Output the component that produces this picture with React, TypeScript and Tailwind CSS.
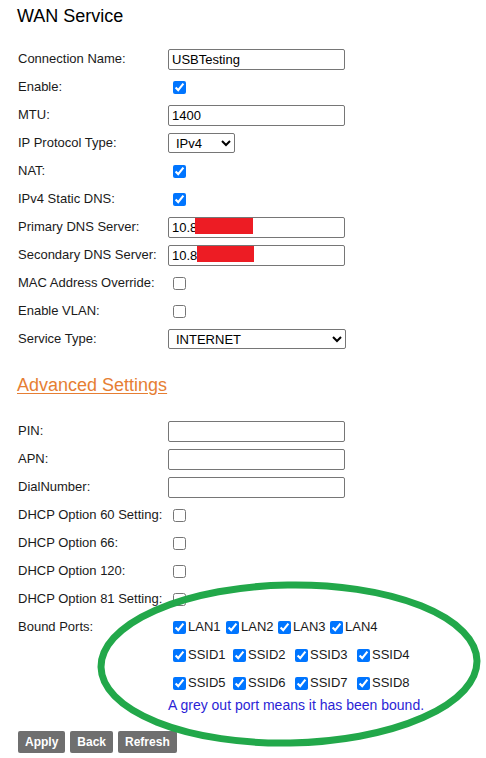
import type { ReactNode } from "react";

function Row({ label, children }: { label: string; children?: ReactNode }) {
  return (
    <div className="grid h-[28px] grid-cols-[150px_1fr] items-center">
      <span className="whitespace-nowrap">{label}</span>
      <div className="flex items-center">{children}</div>
    </div>
  );
}

function TextBox({ value = "", redact }: { value?: string; redact?: string }) {
  return (
    <div className="relative">
      <input
        defaultValue={value}
        className="h-[21px] w-[177px] rounded-[2px] border border-[#767676] bg-white px-[3px] text-[13px] text-black"
      />
      {redact && <div className={`absolute bg-[#ed1c24] ${redact}`} />}
    </div>
  );
}

function Check({ on = false }: { on?: boolean }) {
  return <input type="checkbox" defaultChecked={on} className="ml-[5px] h-[13px] w-[13px]" />;
}

function Port({ name, w }: { name: string; w: string }) {
  return (
    <label className={`flex items-center ${w}`}>
      <input type="checkbox" defaultChecked className="h-[13px] w-[13px]" />
      <span className="ml-[2px]">{name}</span>
    </label>
  );
}

export default function App() {
  return (
    <div className="relative min-h-[758px] bg-white font-['Liberation_Sans',Arial,sans-serif] text-[13px] text-[#1a1a1a]">
      <div className="px-[17px] pt-[5px]">
        <h1 className="text-[18px] leading-[22px] text-black">WAN Service</h1>

        <div className="mt-[18px] pl-[1px]">
          <Row label="Connection Name:">
            <TextBox value="USBTesting" />
          </Row>
          <Row label="Enable:">
            <Check on />
          </Row>
          <Row label="MTU:">
            <TextBox value="1400" />
          </Row>
          <Row label="IP Protocol Type:">
            <select className="h-[20px] w-[67px] rounded-[2px] border border-[#767676] bg-white pl-[3px] text-[13px] text-black">
              <option>IPv4</option>
            </select>
          </Row>
          <Row label="NAT:">
            <Check on />
          </Row>
          <Row label="IPv4 Static DNS:">
            <Check on />
          </Row>
          <Row label="Primary DNS Server:">
            <TextBox value="10.8" redact="left-[27px] top-[1px] h-[16px] w-[58px]" />
          </Row>
          <Row label="Secondary DNS Server:">
            <TextBox value="10.8" redact="left-[29px] top-[1px] h-[16px] w-[57px]" />
          </Row>
          <Row label="MAC Address Override:">
            <Check />
          </Row>
          <Row label="Enable VLAN:">
            <Check />
          </Row>
          <Row label="Service Type:">
            <select className="h-[20px] w-[178px] rounded-[2px] border border-[#767676] bg-white pl-[3px] text-[13px] text-black">
              <option>INTERNET</option>
            </select>
          </Row>
        </div>

        <a href="#" className="mt-[21px] block text-[18px] leading-[22px] text-[#e67e33] underline underline-offset-2">
          Advanced Settings
        </a>

        <div className="mt-[21px] pl-[1px]">
          <Row label="PIN:">
            <TextBox />
          </Row>
          <Row label="APN:">
            <TextBox />
          </Row>
          <Row label="DialNumber:">
            <TextBox />
          </Row>
          <Row label="DHCP Option 60 Setting:">
            <Check />
          </Row>
          <Row label="DHCP Option 66:">
            <Check />
          </Row>
          <Row label="DHCP Option 120:">
            <Check />
          </Row>
          <Row label="DHCP Option 81 Setting:">
            <Check />
          </Row>
          <div className="grid grid-cols-[150px_1fr]">
            <span className="flex h-[28px] items-center">Bound Ports:</span>
            <div className="pl-[5px]">
              <div className="flex h-[28px] items-center">
                <Port name="LAN1" w="w-[53px]" />
                <Port name="LAN2" w="w-[52px]" />
                <Port name="LAN3" w="w-[52px]" />
                <Port name="LAN4" w="w-[52px]" />
              </div>
              <div className="flex h-[28px] items-center">
                <Port name="SSID1" w="w-[60px]" />
                <Port name="SSID2" w="w-[62px]" />
                <Port name="SSID3" w="w-[62px]" />
                <Port name="SSID4" w="w-[62px]" />
              </div>
              <div className="flex h-[28px] items-center">
                <Port name="SSID5" w="w-[60px]" />
                <Port name="SSID6" w="w-[62px]" />
                <Port name="SSID7" w="w-[62px]" />
                <Port name="SSID8" w="w-[62px]" />
              </div>
              <p className="-ml-[5px] text-[14px] leading-[16px] text-[#2b1fd6]">
                A grey out port means it has been bound.
              </p>
            </div>
          </div>
        </div>

        <div className="mt-[18px] flex gap-[5px] pl-[1px]">
          {["Apply", "Back", "Refresh"].map((b) => (
            <button
              key={b}
              className="h-[22px] rounded-[2px] bg-[#6f6f6f] px-[7px] text-[12px] font-bold text-white"
            >
              {b}
            </button>
          ))}
        </div>
      </div>

      {/* annotation circled over the bound ports */}
      <svg className="pointer-events-none absolute left-0 top-0" width="486" height="758">
        <ellipse
          cx="289"
          cy="664"
          rx="188"
          ry="79"
          fill="none"
          stroke="#22a84a"
          strokeWidth="7"
          transform="rotate(-1 289 664)"
        />
      </svg>
    </div>
  );
}
